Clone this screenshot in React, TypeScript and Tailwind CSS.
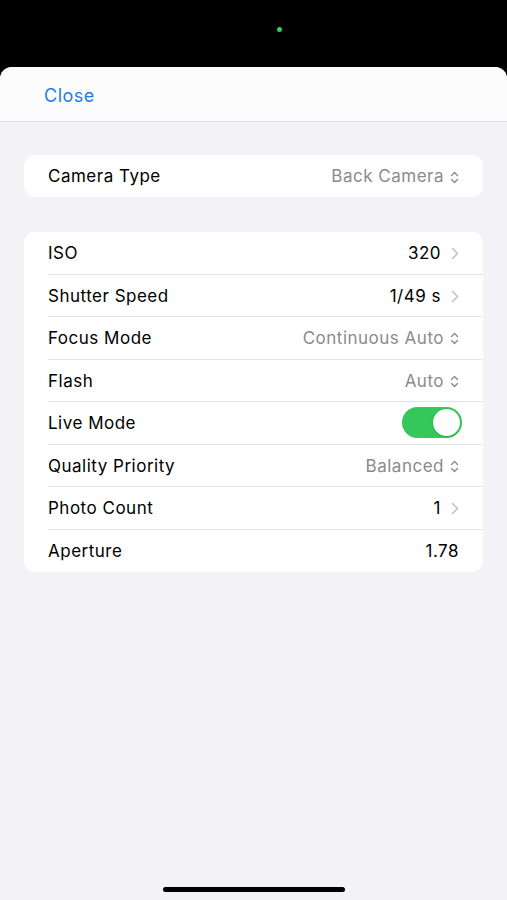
import React from 'react';

// Camera settings sheet

type Row = {
  label: string;
  value?: string;
  kind: 'chevron' | 'updown' | 'plain' | 'toggle';
  dark?: boolean;
};

const rows: Row[] = [
  { label: 'ISO', value: '320', kind: 'chevron', dark: true },
  { label: 'Shutter Speed', value: '1/49 s', kind: 'chevron', dark: true },
  { label: 'Focus Mode', value: 'Continuous Auto', kind: 'updown' },
  { label: 'Flash', value: 'Auto', kind: 'updown' },
  { label: 'Live Mode', kind: 'toggle' },
  { label: 'Quality Priority', value: 'Balanced', kind: 'updown' },
  { label: 'Photo Count', value: '1', kind: 'chevron', dark: true },
  { label: 'Aperture', value: '1.78', kind: 'plain', dark: true },
];

function Chevron() {
  return (
    <svg width="8" height="13" viewBox="0 0 8 13" className="ml-[10px]">
      <path d="M1.5 1.5 L6.5 6.5 L1.5 11.5" fill="none" stroke="#c4c4c8" strokeWidth="1.6" strokeLinecap="round" strokeLinejoin="round" />
    </svg>
  );
}

function UpDown() {
  return (
    <svg width="9" height="13" viewBox="0 0 9 13" className="ml-[6px]">
      <path d="M1.5 4.5 L4.5 1.5 L7.5 4.5 M1.5 8.5 L4.5 11.5 L7.5 8.5" fill="none" stroke="#8a8a8e" strokeWidth="1.4" strokeLinecap="round" strokeLinejoin="round" />
    </svg>
  );
}

function Toggle() {
  return (
    <div className="w-[60px] h-[31px] rounded-full bg-[#34c759] p-[2px] flex justify-end -mr-[3px]">
      <div className="w-[27px] h-[27px] rounded-full bg-white shadow" />
    </div>
  );
}

function SettingRow({ row, last }: { row: Row; last: boolean }) {
  return (
    <div className="pl-6">
      <div className={`h-[42.5px] flex items-center justify-between pr-6 ${last ? '' : 'border-b border-[#e3e3e8]'}`}>
        <span className="text-black pt-[2px]">{row.label}</span>
        {row.kind === 'toggle' ? (
          <Toggle />
        ) : (
          <span className="flex items-center pt-[2px]">
            <span className={row.dark ? 'text-black' : 'text-[#8a8a8e]'}>{row.value}</span>
            {row.kind === 'chevron' && <Chevron />}
            {row.kind === 'updown' && <UpDown />}
          </span>
        )}
      </div>
    </div>
  );
}

export default function App() {
  return (
    <div className="w-[507px] h-[900px] bg-black flex flex-col text-[17px] font-['Inter','Liberation_Sans',sans-serif] tracking-[0.5px]">
      {/* status area */}
      <div className="h-[67px] flex justify-center pt-[27px] pl-[51px]">
        <div className="w-[5px] h-[5px] rounded-full bg-[#30d158]" />
      </div>

      {/* sheet */}
      <div className="flex-1 bg-[#f2f2f7] rounded-t-[12px] overflow-hidden flex flex-col">
        <div className="h-[55px] bg-[#fcfcfd] border-b border-[#dedee3] flex items-center px-[44px] pt-[2px]">
          <span className="text-[#1f7cf0] text-[18px]">Close</span>
        </div>

        <div className="px-6 pt-[33px] flex flex-col gap-[35px]">
          <div className="bg-white rounded-[11px] h-[42px] flex items-center justify-between px-6">
            <span className="text-black pt-[2px]">Camera Type</span>
            <span className="flex items-center pt-[2px]">
              <span className="text-[#8a8a8e]">Back Camera</span>
              <UpDown />
            </span>
          </div>

          <div className="bg-white rounded-[11px]">
            {rows.map((r, i) => (
              <SettingRow key={r.label} row={r} last={i === rows.length - 1} />
            ))}
          </div>
        </div>

        <div className="flex-1" />
        <div className="flex justify-center pb-[8px]">
          <div className="w-[182px] h-[5px] rounded-full bg-black" />
        </div>
      </div>
    </div>
  );
}
